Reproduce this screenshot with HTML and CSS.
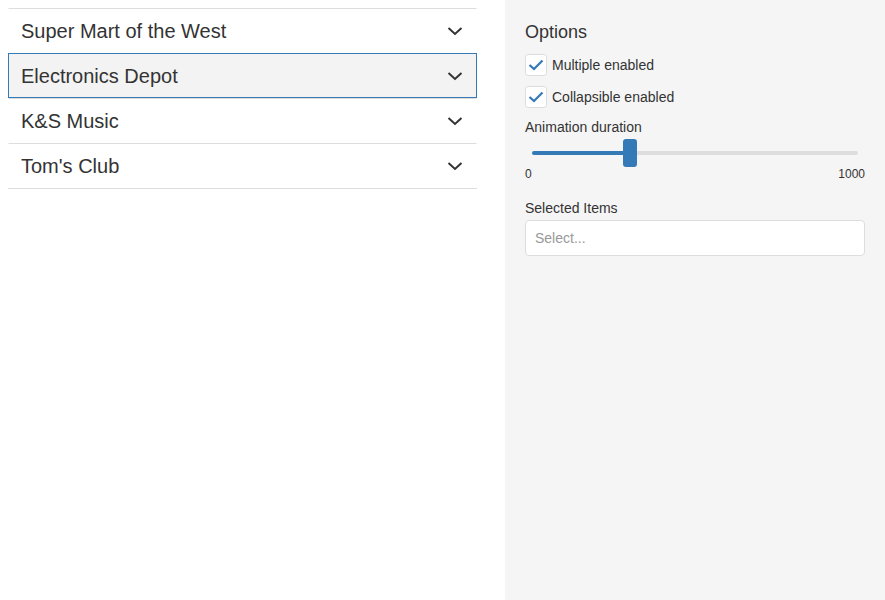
FILE: index.html
```html
<!DOCTYPE html>
<html>
<head>
<meta charset="utf-8">
<link rel="stylesheet" href="styles.css">
</head>
<body>
<div class="page">
  <div class="main">
    <div class="accordion">
      <div class="item">
        <span class="title">Super Mart of the West</span>
        <svg class="chev" width="16" height="10" viewBox="0 0 16 10"><path d="M1.5 2 L8 8 L14.5 2" fill="none" stroke="#333" stroke-width="2"/></svg>
      </div>
      <div class="item focused">
        <span class="title">Electronics Depot</span>
        <svg class="chev" width="16" height="10" viewBox="0 0 16 10"><path d="M1.5 2 L8 8 L14.5 2" fill="none" stroke="#333" stroke-width="2"/></svg>
      </div>
      <div class="item">
        <span class="title">K&amp;S Music</span>
        <svg class="chev" width="16" height="10" viewBox="0 0 16 10"><path d="M1.5 2 L8 8 L14.5 2" fill="none" stroke="#333" stroke-width="2"/></svg>
      </div>
      <div class="item">
        <span class="title">Tom's Club</span>
        <svg class="chev" width="16" height="10" viewBox="0 0 16 10"><path d="M1.5 2 L8 8 L14.5 2" fill="none" stroke="#333" stroke-width="2"/></svg>
      </div>
    </div>
  </div>
  <div class="options">
    <div class="heading">Options</div>
    <div class="check-row first">
      <span class="checkbox"><svg width="16" height="12" viewBox="0 0 16 12"><path d="M1.5 6 L6 10 L14.5 1.5" fill="none" stroke="#337ab7" stroke-width="2.2"/></svg></span>
      <span class="check-label">Multiple enabled</span>
    </div>
    <div class="check-row">
      <span class="checkbox"><svg width="16" height="12" viewBox="0 0 16 12"><path d="M1.5 6 L6 10 L14.5 1.5" fill="none" stroke="#337ab7" stroke-width="2.2"/></svg></span>
      <span class="check-label">Collapsible enabled</span>
    </div>
    <div class="field-label anim">Animation duration</div>
    <div class="slider">
      <div class="track">
        <div class="fill" style="width: 30%"></div>
        <div class="thumb" style="left: 30%"></div>
      </div>
    </div>
    <div class="ticks"><span>0</span><span>1000</span></div>
    <div class="field-label sel">Selected Items</div>
    <div class="select">Select...</div>
  </div>
</div>
</body>
</html>
```
FILE: styles.css
```css
html, body {
  margin: 0;
  padding: 0;
}
body {
  font-family: "Liberation Sans", Arial, sans-serif;
  color: #333;
  background: #fff;
}
.page {
  display: grid;
  grid-template-columns: 505px 380px;
  height: 600px;
}
.main {
  padding: 8px 0 0 8px;
}
.accordion {
  width: 469px;
  border-bottom: 1px solid #ddd;
}
.item {
  box-sizing: border-box;
  height: 45px;
  display: flex;
  align-items: center;
  justify-content: space-between;
  padding: 0 13px 0 12px;
  border: 1px solid transparent;
  border-top-color: #ddd;
  font-size: 20px;
}
.item.focused {
  border-color: #337ab7;
  background: #f3f3f3;
}
.title {
  line-height: 24px;
}
.chev {
  display: block;
}
.options {
  background: #f5f5f5;
  padding: 20px 20px 0 20px;
}
.heading {
  font-size: 18px;
  line-height: 24px;
}
.check-row {
  display: flex;
  align-items: center;
  gap: 5px;
  margin-top: 10px;
  height: 22px;
}
.checkbox {
  box-sizing: border-box;
  width: 22px;
  height: 22px;
  background: #fff;
  border: 1px solid #ddd;
  border-radius: 3px;
  display: flex;
  align-items: center;
  justify-content: center;
}
.check-label {
  font-size: 14px;
  line-height: 20px;
}
.field-label {
  font-size: 14px;
  line-height: 20px;
}
.anim {
  margin-top: 9px;
}
.slider {
  margin-top: 2px;
  height: 28px;
  padding: 0 7px;
  display: flex;
  align-items: center;
}
.track {
  position: relative;
  flex: 1;
  height: 4px;
  border-radius: 2px;
  background: #ddd;
}
.fill {
  height: 4px;
  border-radius: 2px;
  background: #337ab7;
}
.thumb {
  position: absolute;
  top: -12px;
  width: 14px;
  height: 28px;
  margin-left: -7px;
  border-radius: 3px;
  background: #337ab7;
}
.ticks {
  display: flex;
  justify-content: space-between;
  font-size: 12px;
  line-height: 14px;
}
.sel {
  margin-top: 17px;
}
.select {
  box-sizing: border-box;
  margin-top: 2px;
  height: 36px;
  background: #fff;
  border: 1px solid #ddd;
  border-radius: 4px;
  padding: 0 9px;
  font-size: 14px;
  line-height: 34px;
  color: #999;
}
```
